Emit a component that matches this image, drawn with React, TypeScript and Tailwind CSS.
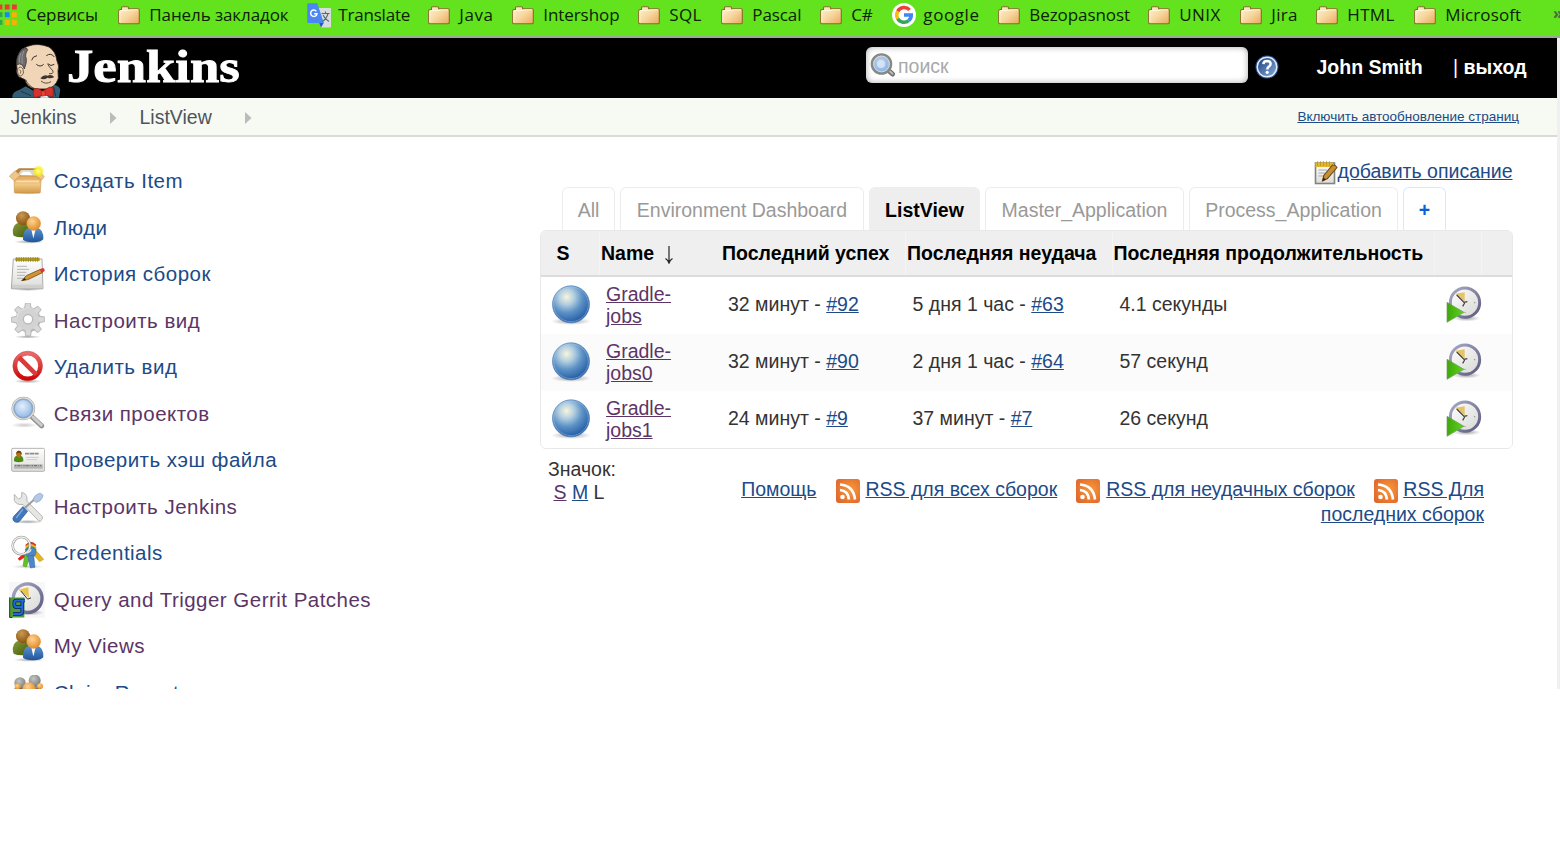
import type { ReactNode } from "react";

const sans = "font-['Liberation_Sans',Arial,sans-serif]";

/* ---------- shared gradients ---------- */

function Gradients() {
  return (
    <svg width="0" height="0" className="absolute">
      <defs>
        <linearGradient id="folder" x1="0" y1="0" x2="1" y2="1">
          <stop offset="0" stopColor="#fff3d0" />
          <stop offset="0.5" stopColor="#f7d7a0" />
          <stop offset="1" stopColor="#e8a85c" />
        </linearGradient>
        <radialGradient id="ball" cx="0.38" cy="0.3" r="0.68">
          <stop offset="0" stopColor="#f7f6dc" />
          <stop offset="0.3" stopColor="#b4cfe0" />
          <stop offset="0.62" stopColor="#5e93c6" />
          <stop offset="1" stopColor="#2a61a8" />
        </radialGradient>
        <radialGradient id="shade">
          <stop offset="0" stopColor="#000" stopOpacity="0.35" />
          <stop offset="1" stopColor="#000" stopOpacity="0" />
        </radialGradient>
        <radialGradient id="brownHead" cx="0.4" cy="0.3" r="0.7">
          <stop offset="0" stopColor="#c99a55" />
          <stop offset="1" stopColor="#8a540f" />
        </radialGradient>
        <radialGradient id="orangeHead" cx="0.4" cy="0.35" r="0.7">
          <stop offset="0" stopColor="#ffd394" />
          <stop offset="1" stopColor="#e0861c" />
        </radialGradient>
        <radialGradient id="greyHead" cx="0.4" cy="0.35" r="0.7">
          <stop offset="0" stopColor="#c4c6c4" />
          <stop offset="1" stopColor="#777a77" />
        </radialGradient>
        <linearGradient id="greenBody" x1="0" y1="0" x2="1" y2="1">
          <stop offset="0" stopColor="#8a9a3c" />
          <stop offset="1" stopColor="#3d5a06" />
        </linearGradient>
        <linearGradient id="blueBody" x1="0" y1="0" x2="0" y2="1">
          <stop offset="0" stopColor="#5e92cf" />
          <stop offset="1" stopColor="#1f559c" />
        </linearGradient>
        <linearGradient id="carton" x1="0" y1="0" x2="0" y2="1">
          <stop offset="0" stopColor="#e0a75c" />
          <stop offset="0.5" stopColor="#f0c884" />
          <stop offset="1" stopColor="#d39a4a" />
        </linearGradient>
        <linearGradient id="silver" x1="0" y1="0" x2="1" y2="1">
          <stop offset="0" stopColor="#f2f2f2" />
          <stop offset="0.5" stopColor="#cfcfcf" />
          <stop offset="1" stopColor="#a9a9a9" />
        </linearGradient>
        <linearGradient id="paper" x1="0" y1="0" x2="0" y2="1">
          <stop offset="0" stopColor="#ffffff" />
          <stop offset="1" stopColor="#dcdcda" />
        </linearGradient>
        <linearGradient id="red" x1="0" y1="0" x2="0" y2="1">
          <stop offset="0" stopColor="#ea6a6a" />
          <stop offset="1" stopColor="#cc0808" />
        </linearGradient>
        <radialGradient id="glass" cx="0.45" cy="0.4" r="0.6">
          <stop offset="0" stopColor="#e6f0fb" />
          <stop offset="1" stopColor="#86b1e2" />
        </radialGradient>
        <linearGradient id="dial" x1="0" y1="0" x2="1" y2="1">
          <stop offset="0" stopColor="#ffffff" />
          <stop offset="1" stopColor="#d6d8d3" />
        </linearGradient>
        <linearGradient id="rim" x1="0" y1="0" x2="1" y2="1">
          <stop offset="0" stopColor="#a9abc6" />
          <stop offset="1" stopColor="#5c5a80" />
        </linearGradient>
        <linearGradient id="play" x1="0" y1="0" x2="1" y2="0">
          <stop offset="0" stopColor="#3fa60c" />
          <stop offset="1" stopColor="#5fd41a" />
        </linearGradient>
        <radialGradient id="rss" cx="0.6" cy="0.45" r="0.75">
          <stop offset="0" stopColor="#f99a3c" />
          <stop offset="1" stopColor="#dd632a" />
        </radialGradient>
        <radialGradient id="sun">
          <stop offset="0" stopColor="#ffffb0" />
          <stop offset="0.5" stopColor="#fbf02a" />
          <stop offset="1" stopColor="#f7e800" stopOpacity="0.1" />
        </radialGradient>
        <linearGradient id="help" x1="0" y1="0" x2="1" y2="1">
          <stop offset="0" stopColor="#1b3f7c" />
          <stop offset="1" stopColor="#86acdc" />
        </linearGradient>
      </defs>
    </svg>
  );
}

/* ---------- bookmark bar ---------- */

function FolderIcon() {
  return (
    <svg width="22" height="19" viewBox="0 0 22 19">
      <path d="M3.500 3.500V1.800Q3.500 .7 4.600 .7H9.500Q10.600 .7 10.600 1.800V2.700H20Q21.300 2.700 21.300 4V16.500Q21.300 17.800 20 17.800H2Q.7 17.800 .7 16.500V5Q.7 3.500 2 3.500Z" fill="url(#folder)" stroke="#8a6a2c" strokeWidth="1.1" />
      <path d="M1.800 16.500V5.200Q1.800 4.600 2.500 4.600H11L12 3.800H20.200" fill="none" stroke="#fff8e2" strokeWidth="0.9" />
    </svg>
  );
}

function AppsIcon() {
  const rows = [
    ["#ea3b33", "#ea3b33", "#ea3b33"],
    ["#2fa84f", "#1f85f5", "#fbb008"],
    ["#2fa84f", "#fbb008", "#fbb008"],
  ];
  return (
    <svg width="19" height="22" viewBox="0 0 19 22">
      {rows.map((r, y) => r.map((c, x) => <rect key={`${x}${y}`} x={x * 7.2 - 0.4} y={y * 7.7 + 0.5} width="4.8" height="5" fill={c} />))}
    </svg>
  );
}

function TranslateIcon() {
  return (
    <svg width="24" height="25" viewBox="0 0 24 25">
      <path d="M10 5H23Q24 5 24 6V23.500Q24 24.500 23 24.500H14Z" fill="#d9dcdc" />
      <path d="M12 19.500H17L14 24.500Z" fill="#2a52c4" />
      <path d="M1.500 .3H10.300L16.800 20H1.500Q.2 20 .2 18.700V1.600Q.2 .3 1.500 .3Z" fill="#4a87f2" />
      <path d="M14.500 10.500H22.500M18.500 8.500V10.500M21 10.500Q19.500 16 15.500 18.500M16 12Q18 16.500 22 18.500" fill="none" stroke="#566b72" strokeWidth="1.1" />
      <path d="M9.400 8.300A3.200 3.200 0 1 0 10 10.800H7.200" fill="none" stroke="#fff" strokeWidth="1.4" />
    </svg>
  );
}

function GoogleIcon() {
  return (
    <svg width="24" height="24" viewBox="0 0 24 24">
      <circle cx="12" cy="12" r="12" fill="#fff" />
      <g fill="none" strokeWidth="3.5">
        <path d="M17.600 6.900A7.300 7.300 0 0 0 5.700 8.300" stroke="#ea4335" />
        <path d="M5.700 8.300A7.300 7.300 0 0 0 5.700 15.700" stroke="#fbbc05" />
        <path d="M5.700 15.700A7.300 7.300 0 0 0 16.700 17.600" stroke="#34a853" />
        <path d="M16.700 17.600A7 7 0 0 0 19.300 12H12" stroke="#4285f4" />
      </g>
    </svg>
  );
}

const bookmarks: { label: string; width: string; icon?: "apps" | "translate" | "google"; text: string }[] = [
  { label: "Сервисы", width: "w-[120px]", icon: "apps", text: "tracking-[-0.07px]" },
  { label: "Панель закладок", width: "w-[189px]", text: "tracking-[-0.1px]" },
  { label: "Translate", width: "w-[121px]", icon: "translate", text: "tracking-[-0.2px]" },
  { label: "Java", width: "w-[84px]", text: "tracking-[0.6px]" },
  { label: "Intershop", width: "w-[126px]", text: "tracking-[-0.08px]" },
  { label: "SQL", width: "w-[83px]", text: "tracking-[0.3px]" },
  { label: "Pascal", width: "w-[99px]", text: "tracking-[-0.1px]" },
  { label: "C#", width: "w-[72px]", text: "tracking-[-0.2px]" },
  { label: "google", width: "w-[106px]", icon: "google", text: "tracking-[0.6px]" },
  { label: "Bezopasnost", width: "w-[150px]", text: "tracking-[-0.08px]" },
  { label: "UNIX", width: "w-[92px]", text: "tracking-[0.4px]" },
  { label: "Jira", width: "w-[76px]", text: "tracking-[0.3px]" },
  { label: "HTML", width: "w-[98px]", text: "tracking-[0.3px]" },
  { label: "Microsoft", width: "w-[138px]", text: "tracking-[0.1px]" },
];

function BookmarkBar() {
  return (
    <div className="flex h-[38px] overflow-hidden border-b-2 border-[#9aa896] bg-[#62e31d] font-['Open_Sans','Segoe_UI',sans-serif] text-[17px] leading-[30px] text-[#0c2204]">
      <div className="-ml-[2px] flex shrink-0">
        {bookmarks.map((b) => (
          <div key={b.label} className={`flex h-[30px] shrink-0 items-center whitespace-nowrap ${b.width}`}>
            <span className={`flex shrink-0 items-center ${b.icon === "apps" ? "w-[28px]" : "w-[31.3px]"} ${b.icon ? "" : "pt-[1px]"}`}>
              {b.icon === "apps" ? <AppsIcon /> : b.icon === "translate" ? <TranslateIcon /> : b.icon === "google" ? <GoogleIcon /> : <FolderIcon />}
            </span>
            <span className={b.text}>{b.label}</span>
          </div>
        ))}
        <span className="ml-[1px] text-[16px] font-bold leading-[26px] text-[#4b6b3c]">»</span>
      </div>
    </div>
  );
}

/* ---------- header ---------- */

function Butler() {
  return (
    <svg width="50" height="54.67" viewBox="35 130 150 164" className="self-end">
      <path d="M36 294Q34 276 58 270L76 260L100 274L128 292L150 272L158 256Q176 256 180 270L176 294Z" fill="#335d77" />
      <path d="M62 275L92 288M160 262L166 290" stroke="#1d3442" strokeWidth="3" fill="none" />
      <path d="M122 288L138 286L146 294H120Z" fill="#fff" />
      <path d="M56 232Q46 222 50 206L48 190Q50 150 82 140Q112 128 146 142Q166 154 170 184Q178 200 173 214L174 236Q166 264 138 268L104 268Q78 262 74 240Q66 236 56 232Z" fill="#f0d6b7" stroke="#2e2420" strokeWidth="2.5" />
      <path d="M50 196Q46 166 66 150Q80 142 82 150Q72 168 78 176Q80 190 72 208L66 196Q56 190 50 196Z" fill="#6d6b6d" stroke="#2c2a2c" strokeWidth="2" />
      <path d="M62 160Q54 176 58 190M70 154Q62 172 66 192" stroke="#a9a7a9" strokeWidth="2" fill="none" />
      <path d="M52 208Q60 196 68 208Q74 222 62 230Q50 226 52 208ZM58 210Q64 214 60 222" fill="#f0d6b7" stroke="#3c2e26" strokeWidth="2" />
      <path d="M94 182Q96 170 110 168M138 168Q152 158 162 172" fill="none" stroke="#3a2f2a" strokeWidth="3" />
      <path d="M108 194Q120 204 130 194M142 192Q152 202 162 194" fill="none" stroke="#3a2f2a" strokeWidth="3" />
      <path d="M142 194Q150 206 158 214Q160 224 146 222" fill="none" stroke="#3a2f2a" strokeWidth="2.5" />
      <path d="M120 236Q130 224 142 228Q152 222 162 232Q150 238 142 234Q130 242 120 236Z" fill="#3e3430" />
      <path d="M122 244Q136 256 152 246M76 240Q84 260 106 268" fill="none" stroke="#3a2f2a" strokeWidth="2.5" />
      <path d="M100 268Q112 262 126 274L148 262Q160 262 159 274L157 292L132 286L102 294Q96 282 100 268Z" fill="#d8302b" stroke="#7c1512" strokeWidth="1.5" />
      <path d="M122 275L134 273L136 288L124 290Z" fill="#ec3f3a" stroke="#8a1815" strokeWidth="1.5" />
    </svg>
  );
}

function SearchIcon() {
  return (
    <svg width="26" height="25" viewBox="0 0 26 25">
      <path d="M18 17L22.500 21" stroke="#70716f" strokeWidth="5" strokeLinecap="round" />
      <path d="M19.500 18L22.500 20.800" stroke="#b9bab7" strokeWidth="2" strokeLinecap="round" />
      <circle cx="11.500" cy="11" r="9.600" fill="url(#glass)" stroke="#868984" strokeWidth="2.4" />
      <circle cx="11.500" cy="11" r="7.800" fill="#7aa6da" fillOpacity="0.35" stroke="#d4d9de" strokeWidth="1" />
      <circle cx="11" cy="11" r="4" fill="#dce9f7" fillOpacity="0.8" />
    </svg>
  );
}

function HelpIcon() {
  return (
    <svg width="24" height="24" viewBox="0 0 24 24">
      <circle cx="12" cy="12" r="11.500" fill="#2a4f8f" />
      <circle cx="12" cy="12" r="9.800" fill="url(#help)" stroke="#e2ebf7" strokeWidth="1.5" />
      <path d="M8.300 9.200Q8.600 5.900 12 5.900Q15.700 6 15.600 9Q15.500 10.600 13.700 11.700Q12.300 12.700 12.300 14.500" fill="none" stroke="#fff" strokeWidth="2.5" />
      <circle cx="12.200" cy="17.300" r="1.600" fill="#fff" />
    </svg>
  );
}

function Header() {
  return (
    <header className={`flex h-[60px] shrink-0 items-stretch overflow-hidden bg-black text-[19.5px] font-bold text-white ${sans}`}>
      <div className="flex w-[866px] pl-[11.7px]">
        <Butler />
        <span className="mt-[6px] ml-[5.5px] inline-block origin-left scale-x-[1.145] self-start font-['Liberation_Serif',Georgia,serif] text-[46px] leading-[46px] whitespace-nowrap [-webkit-text-stroke:0.9px_white]">Jenkins</span>
      </div>
      <div className="mt-[9px] flex h-[36px] w-[382px] items-center rounded-[6px] bg-white pl-[4px] shadow-[inset_0_0_6px_rgba(0,0,0,0.35)]">
        <SearchIcon />
        <span className="ml-[2px] pt-[4px] font-normal text-[#a9a9a9]">поиск</span>
      </div>
      <div className="ml-[7px] flex items-center pb-[2px]">
        <HelpIcon />
      </div>
      <div className="flex items-center whitespace-pre">
        <span className="ml-[37.5px] w-[136.5px]">John Smith</span>
        <span className="w-[10.5px] font-normal">|</span>
        <span>выход</span>
      </div>
    </header>
  );
}

function Crumb({ children }: { children: ReactNode }) {
  return (
    <>
      <span>{children}</span>
      <svg width="8" height="12" viewBox="0 0 8 12">
        <path d="M1 0L7.500 6L1 12Z" fill="#bbb" />
      </svg>
    </>
  );
}

function Breadcrumbs() {
  return (
    <nav className={`flex h-[39px] shrink-0 items-center justify-between border-b-2 border-[#d9dcd6] bg-[#f6faf2] pt-[2px] pr-[38px] pl-[10.5px] text-[19.5px] text-[#4d545d] ${sans}`}>
      <div className="flex items-center">
        <div className="flex w-[129px] items-center gap-[32.5px]">
          <Crumb>Jenkins</Crumb>
        </div>
        <div className="flex items-center gap-[32px]">
          <Crumb>ListView</Crumb>
        </div>
      </div>
      <a className="text-[13.5px] text-[#204a87] underline">Включить автообновление страниц</a>
    </nav>
  );
}

/* ---------- sidebar icons ---------- */

function Icon({ box, children, size = 36 }: { box: string; children: ReactNode; size?: number }) {
  return (
    <svg width={size} height={size} viewBox={box} className="block shrink-0">
      {children}
    </svg>
  );
}

function BoxIcon() {
  return (
    <Icon box="28 39 108 108">
      <ellipse cx="84" cy="128" rx="48" ry="6" fill="url(#shade)" />
      <path d="M48 62L58 55H112L126 66L122 82H46Z" fill="#b98238" />
      <path d="M52 76L64 60H112L116 78Z" fill="#d9d6cc" />
      <path d="M60 76L70 65H90L98 76Z" fill="#fff" />
      <path d="M43 78H125L122 126Q122 129 118 129H48Q44 129 44 126Z" fill="url(#carton)" stroke="#c08a40" strokeWidth="1.5" />
      <path d="M46 62L29 79Q40 89 44 92L62 76Z" fill="#efc68a" stroke="#c08a40" strokeWidth="1.5" />
      <path d="M122 66L134 80L126 90L108 76Z" fill="#efc68a" stroke="#c08a40" strokeWidth="1.5" />
      <path d="M50 94H118" stroke="#f9dfb0" strokeWidth="5" />
      <circle cx="116" cy="64" r="18" fill="url(#sun)" />
    </Icon>
  );
}

function PeopleIcon() {
  return (
    <Icon box="28 178.5 108 108">
      <ellipse cx="88" cy="274" rx="46" ry="6" fill="url(#shade)" />
      <path d="M40 250Q36 222 58 216L92 218L88 258Q60 264 42 256Z" fill="url(#greenBody)" />
      <circle cx="70" cy="203" r="21" fill="url(#brownHead)" />
      <path d="M70 268Q68 236 90 232H112Q132 236 131 266Q122 276 98 275Q78 275 70 268Z" fill="url(#blueBody)" />
      <path d="M95 236L101 264L108 236Z" fill="#fff" />
      <circle cx="102" cy="219" r="21.500" fill="url(#orangeHead)" />
    </Icon>
  );
}

function NotepadIcon() {
  return (
    <Icon box="28 318 108 108">
      <ellipse cx="84" cy="418" rx="50" ry="5" fill="url(#shade)" />
      <path d="M41 327H127L130 416H35Z" fill="url(#paper)" stroke="#9a9c98" strokeWidth="2.5" />
      <path d="M37 404H129V415H37Z" fill="#cfd0cc" />
      <rect x="47" y="323" width="73" height="10" fill="#b5a02c" />
      <path d="M51 321V336M58 321V336M65 321V336M72 321V336M79 321V336M86 321V336M93 321V336M100 321V336M107 321V336M114 321V336" stroke="#857726" strokeWidth="2" />
      <path d="M52 349H82M52 358H88M52 367H80M52 376H76M52 385H70" stroke="#b4b6b2" strokeWidth="3" />
      <path d="M66 392L80 377L122 358L128 368L84 389Z" fill="#cf9436" stroke="#7a5012" strokeWidth="2.5" />
      <path d="M66 392L75 384L79 389Z" fill="#33220a" />
      <path d="M120 358L130 354Q137 356 134 364L126 369Z" fill="#e0333a" />
    </Icon>
  );
}

function GearIcon() {
  const teeth = [0, 45, 90, 135, 180, 225, 270, 315];
  return (
    <Icon box="28 457.5 108 108">
      <ellipse cx="84" cy="559" rx="40" ry="5" fill="url(#shade)" />
      <g fill="#cdcdcd" stroke="#a8a8a8" strokeWidth="2">
        {teeth.map((a) => (
          <path key={a} d="M74 478L77 458H92L95 478Z" transform={`rotate(${a} 85 507)`} />
        ))}
      </g>
      <circle cx="85" cy="507" r="37" fill="url(#silver)" stroke="#a8a8a8" strokeWidth="1.5" />
      <g fill="#d9d9d9">
        {teeth.map((a) => (
          <path key={a} d="M76 482L79 460H90L93 482Z" transform={`rotate(${a} 85 507)`} />
        ))}
      </g>
      <circle cx="85" cy="507" r="32" fill="#d3d3d3" />
      <circle cx="85" cy="506" r="14" fill="#fff" stroke="#b9b9b9" strokeWidth="4" />
    </Icon>
  );
}

function StopIcon() {
  return (
    <Icon box="28 27 108 108">
      <ellipse cx="84" cy="124" rx="42" ry="6" fill="url(#shade)" />
      <circle cx="84" cy="78" r="38" fill="#fff" stroke="url(#red)" strokeWidth="13" />
      <path d="M58 52L110 104" stroke="#dc3a3a" strokeWidth="14" />
      <circle cx="84" cy="78" r="44.500" fill="none" stroke="#c63c3c" strokeWidth="1.5" />
    </Icon>
  );
}

function MagnifierIcon() {
  return (
    <Icon box="28 166.5 108 108">
      <ellipse cx="74" cy="254" rx="40" ry="8" fill="url(#shade)" opacity="0.6" />
      <path d="M98 230L126 256" stroke="#8e908d" strokeWidth="15" strokeLinecap="round" />
      <path d="M100 230L125 254" stroke="#cccdca" strokeWidth="9" strokeLinecap="round" />
      <circle cx="71" cy="204" r="32" fill="url(#glass)" stroke="#a0a29e" strokeWidth="7" />
      <circle cx="71" cy="204" r="32" fill="none" stroke="#dcdddb" strokeWidth="4" />
      <circle cx="71" cy="204" r="27" fill="none" stroke="#6b95cc" strokeWidth="2" />
    </Icon>
  );
}

function CardIcon() {
  return (
    <Icon box="28 306 108 108">
      <rect x="36" y="325" width="99" height="69" rx="4" fill="url(#paper)" stroke="#b4b5b1" strokeWidth="3" />
      <path d="M43 364Q42 350 50 348H64Q72 350 71 364Q58 370 43 364Z" fill="#4e8a14" />
      <path d="M50 346Q46 334 57 332Q68 334 65 346Q62 354 57 354Q52 352 50 346Z" fill="#b5701c" />
      <path d="M50 340Q52 331 58 332Q66 332 66 344L60 338Z" fill="#6e3f08" />
      <path d="M76 341H117" stroke="#8d8e90" strokeWidth="5" strokeDasharray="13 1.5" />
      <path d="M80 352H117M80 359H112" stroke="#c4c5c2" strokeWidth="2.5" />
      <rect x="43" y="373" width="86" height="13" fill="#b4b5b2" />
      <path d="M46 377H126" stroke="#6a6a6a" strokeWidth="3" strokeDasharray="4 3 9 3 2 4" />
    </Icon>
  );
}

function ToolsIcon() {
  return (
    <Icon box="28 445.5 108 108">
      <ellipse cx="84" cy="544" rx="48" ry="6" fill="url(#shade)" />
      <path d="M44 462L57 476L66 470L66 456Q80 458 82 472L82 482L128 528Q130 540 118 542L70 492Q50 494 44 480Z" fill="#e6e6e4" stroke="#a9aaa7" strokeWidth="2.5" />
      <path d="M76 502L110 472" stroke="#9c9ea0" strokeWidth="6" />
      <path d="M100 478Q104 462 122 458L130 464Q128 480 110 486Z" fill="#b4c8e4" stroke="#7e9cc4" strokeWidth="2" />
      <path d="M70 498L84 512L60 542Q50 550 41 540Q38 534 42 528Z" fill="#4377bb" stroke="#2b5796" strokeWidth="2" />
      <path d="M70 506L50 532" stroke="#84abdc" strokeWidth="4" />
    </Icon>
  );
}

function KeysIcon() {
  return (
    <Icon box="28 45 108 108">
      <ellipse cx="84" cy="140" rx="50" ry="6" fill="url(#shade)" opacity="0.6" />
      <path d="M76 76Q92 56 110 74L104 84L86 80Z" fill="#d8342a" />
      <path d="M54 116L76 96L84 106L60 122Z" fill="#e22626" />
      <path d="M106 88L132 118L120 125L98 100Z" fill="#e2b622" stroke="#b58d10" strokeWidth="1.5" />
      <path d="M76 80Q94 62 111 82L106 92L82 90Z" fill="#efb71e" />
      <path d="M76 100L70 138L80 141L92 108Z" fill="#62c322" stroke="#3f9410" strokeWidth="1.5" />
      <path d="M75 88Q94 68 111 88L104 98L82 96Z" fill="#4fae2a" />
      <circle cx="93" cy="97" r="16" fill="#4f86c6" stroke="#2f62a4" strokeWidth="1.5" />
      <path d="M84 108L92 144L106 142L102 106Z" fill="#4f86c6" stroke="#2f62a4" strokeWidth="1.5" />
      <circle cx="65" cy="77" r="26" fill="none" stroke="#8f908d" strokeWidth="7.5" />
      <circle cx="65" cy="77" r="26" fill="none" stroke="#efefed" strokeWidth="4.5" />
      <path d="M76 98Q92 98 94 88" fill="none" stroke="#e9e9e7" strokeWidth="4" />
    </Icon>
  );
}

function GerritIcon() {
  return (
    <Icon box="28 184.5 108 108">
      <rect x="28" y="184" width="108" height="108" fill="#f7f7f7" />
      <ellipse cx="92" cy="276" rx="40" ry="9" fill="url(#shade)" />
      <circle cx="84" cy="233" r="43" fill="url(#dial)" stroke="url(#rim)" strokeWidth="10" />
      <path d="M56 208L86 200L88 232Z" fill="#e9c54c" />
      <path d="M64 212L84 236L94 232" fill="none" stroke="#333" strokeWidth="3" />
      <rect x="30" y="231" width="44" height="60" fill="#4f9a3c" />
      <path d="M30 231V291H38" fill="none" stroke="#23401a" strokeWidth="3" />
      <g fill="none" strokeLinejoin="round">
        <path d="M76 240H50Q44 240 44 247V253Q44 260 51 260H68M68 240V272Q68 280 60 280H40" stroke="#0c1f52" strokeWidth="11" />
        <path d="M76 240H50Q44 240 44 247V253Q44 260 51 260H68M68 240V272Q68 280 60 280H40" stroke="#2267d8" strokeWidth="6.5" />
      </g>
    </Icon>
  );
}

function CrowdIcon() {
  return (
    <Icon box="28 463.5 108 108">
      <path d="M40 540Q36 500 62 496H112Q134 500 130 540Z" fill="#8a8d88" />
      <circle cx="61" cy="487" r="17" fill="url(#greyHead)" />
      <circle cx="105" cy="480" r="18" fill="url(#greyHead)" />
      <path d="M36 508Q44 502 66 504V540H36ZM110 505Q128 502 131 512V540H110Z" fill="#5a2f14" />
      <circle cx="54" cy="498" r="9" fill="url(#orangeHead)" />
      <circle cx="121" cy="497" r="9" fill="url(#orangeHead)" />
      <circle cx="88" cy="504" r="19" fill="url(#orangeHead)" />
    </Icon>
  );
}

const blue = "text-[#204a87]";
const purple = "text-[#5c3566]";

const tasks: { label: string; color: string; icon: ReactNode }[] = [
  { label: "Создать Item", color: blue, icon: <BoxIcon /> },
  { label: "Люди", color: blue, icon: <PeopleIcon /> },
  { label: "История сборок", color: blue, icon: <NotepadIcon /> },
  { label: "Настроить вид", color: purple, icon: <GearIcon /> },
  { label: "Удалить вид", color: blue, icon: <StopIcon /> },
  { label: "Связи проектов", color: purple, icon: <MagnifierIcon /> },
  { label: "Проверить хэш файла", color: blue, icon: <CardIcon /> },
  { label: "Настроить Jenkins", color: purple, icon: <ToolsIcon /> },
  { label: "Credentials", color: blue, icon: <KeysIcon /> },
  { label: "Query and Trigger Gerrit Patches", color: purple, icon: <GerritIcon /> },
  { label: "My Views", color: purple, icon: <PeopleIcon /> },
  { label: "Claim Report", color: blue, icon: <CrowdIcon /> },
];

function Sidebar() {
  return (
    <aside className="w-[539.5px] shrink-0 pt-[20.75px] pl-[9.3px]">
      {tasks.map((t) => (
        <div key={t.label} className="flex h-[46.5px] items-center gap-[8.5px]">
          {t.icon}
          <a className={`pt-[1px] text-[20.5px] tracking-[0.48px] whitespace-nowrap ${t.color}`}>{t.label}</a>
        </div>
      ))}
    </aside>
  );
}

/* ---------- job list ---------- */

function EditIcon() {
  return (
    <svg width="24" height="24" viewBox="0 0 24 24" className="shrink-0">
      <rect x="1.500" y="2" width="19" height="20.500" fill="url(#paper)" stroke="#82847f" strokeWidth="1.6" />
      <path d="M1.500 1.500H19V6H1.500Z" fill="#e3b62f" />
      <path d="M3.500 .3V5M6.500 .3V5M9.500 .3V5M12.500 .3V5M15.500 .3V5" stroke="#c79a1c" strokeWidth="1" />
      <path d="M4.500 9H13M4.500 12H11M4.500 15H9" stroke="#a9aaa6" strokeWidth="1" />
      <path d="M8.500 20L9.800 14.500L18.500 4Q21.500 3.500 23 6.500L13.500 17.500Z" fill="#c98f35" stroke="#6b4712" strokeWidth="1.1" />
      <path d="M8.500 20L9.300 16.500L12 18.500Z" fill="#222" />
    </svg>
  );
}

function BallIcon() {
  return (
    <Icon box="64 403 120 120" size={40}>
      <ellipse cx="124" cy="512" rx="60" ry="11" fill="url(#shade)" />
      <circle cx="124" cy="461" r="55.500" fill="url(#ball)" stroke="#4a7fbc" strokeWidth="2" />
      <circle cx="124" cy="461" r="52" fill="none" stroke="#a6c6e4" strokeOpacity="0.55" strokeWidth="2.5" />
    </Icon>
  );
}

function ScheduleIcon() {
  return (
    <Icon box="45 46 114 114" size={38}>
      <ellipse cx="110" cy="146" rx="42" ry="9" fill="url(#shade)" />
      <circle cx="105" cy="99" r="44" fill="url(#dial)" stroke="url(#rim)" strokeWidth="9" />
      <path d="M76 72L104 68L104 96Z" fill="#e5c468" />
      <path d="M80 76L102 98L112 96M104 100L98 110" fill="none" stroke="#3c3c3c" strokeWidth="3.5" />
      <circle cx="134" cy="99" r="2" fill="#888" />
      <circle cx="105" cy="128" r="2" fill="#888" />
      <path d="M51 98L102 128L51 158Z" fill="url(#play)" stroke="#6f9c68" strokeWidth="2" />
    </Icon>
  );
}

function RssIcon() {
  return (
    <svg width="24" height="24" viewBox="0 0 24 24" className="mt-[2px] shrink-0">
      <rect width="24" height="24" rx="3" fill="url(#rss)" />
      <circle cx="6.500" cy="18" r="2.300" fill="#fff" />
      <path d="M4 11Q12 11.500 13 20.500M4 5.500Q17.500 6.500 19 20.500" fill="none" stroke="#fff" strokeWidth="2.7" />
    </svg>
  );
}

const tabs = [
  { label: "All", width: "w-[53px]" },
  { label: "Environment Dashboard", width: "w-[244px]" },
  { label: "ListView", width: "w-[111px]", active: true },
  { label: "Master_Application", width: "w-[199px]" },
  { label: "Process_Application", width: "w-[209px]" },
];

function Tabs() {
  return (
    <div className="ml-[22.5px] flex h-[43px] gap-[5px] text-center leading-[44px]">
      {tabs.map((t) => (
        <div
          key={t.label}
          className={`rounded-t-[6px] border border-b-0 ${t.width} ${t.active ? "border-[#eee] bg-[#eee] font-bold text-black" : "border-[#ececec] text-[#999]"}`}
        >
          {t.label}
        </div>
      ))}
      <div className="w-[43px] rounded-t-[6px] border border-b-0 border-[#d3ecfb] font-bold text-[#0b60d6]">+</div>
    </div>
  );
}

const columns = "grid grid-cols-[59.5px_121px_185px_206.5px_322.5px_47px_1fr]";

const jobs = [
  { name: ["Gradle-", "jobs"], ok: "32 минут", okRef: "#92", fail: "5 дня 1 час", failRef: "#63", time: "4.1 секунды", bg: "bg-white" },
  { name: ["Gradle-", "jobs0"], ok: "32 минут", okRef: "#90", fail: "2 дня 1 час", failRef: "#64", time: "57 секунд", bg: "bg-[#fbfbfb]" },
  { name: ["Gradle-", "jobs1"], ok: "24 минут", okRef: "#9", fail: "37 минут", failRef: "#7", time: "26 секунд", bg: "bg-white" },
];

function JobTable() {
  return (
    <div className="w-[973px] overflow-hidden rounded-[6px] border border-[#e8e8e8] text-[#333]">
      <div className={`${columns} h-[46px] border-b-2 border-[#dcdcdc] bg-[#efefef] leading-[44px] font-bold whitespace-nowrap text-black`}>
        <span className="border-r border-[#f4f4f4] pl-[16px]">S</span>
        <span className="flex items-center pl-px">
          Name
          <svg width="10" height="18" viewBox="0 0 10 18" className="mt-[4px] ml-[10px]">
            <path d="M5 0V16.500M1.500 12.500Q4 14 5 17Q6 14 8.500 12.500" fill="none" stroke="#222" strokeWidth="1.2" />
          </svg>
        </span>
        <span className="border-r border-[#f4f4f4] pl-px">Последний успех</span>
        <span className="border-r border-[#f4f4f4] pl-px">Последняя неудача</span>
        <span className="border-r border-[#f4f4f4] pl-px">Последняя продолжительность</span>
        <span className="border-r border-[#f4f4f4]" />
        <span />
      </div>
      {jobs.map((j) => (
        <div key={j.name[1]} className={`${columns} h-[57px] items-center pb-[2px] whitespace-nowrap ${j.bg}`}>
          <span className="pl-[10.5px]">
            <BallIcon />
          </span>
          <a className="flex flex-col pl-[6px] leading-[22px] text-[#5c3566] underline">
            <span>{j.name[0]}</span>
            <span>{j.name[1]}</span>
          </a>
          <span className="pl-[7px]">
            {j.ok} - <a className="text-[#204a87] underline">{j.okRef}</a>
          </span>
          <span className="pl-[6.5px]">
            {j.fail} - <a className="text-[#204a87] underline">{j.failRef}</a>
          </span>
          <span className="pl-[7px]">{j.time}</span>
          <span className="pb-[2px] pl-[9.5px]">
            <ScheduleIcon />
          </span>
        </div>
      ))}
    </div>
  );
}

function Footer() {
  return (
    <div className="flex">
      <div className="w-[201px] shrink-0 pt-[9px] pl-[8.5px] leading-[23px] text-[#333]">
        <div>Значок:</div>
        <div className="pl-[5.5px]">
          <a className="text-[#5c3566] underline">S</a> <a className="text-[#204a87] underline">M</a> L
        </div>
      </div>
      <div className="flex w-[743.5px] flex-col items-end pt-[27.5px] leading-[25px] whitespace-nowrap text-[#204a87]">
        <div className="flex h-[25px]">
          <a className="mr-[19.5px] underline">Помощь</a>
          <RssIcon />
          <a className="mr-[19px] ml-[5.5px] underline">RSS для всех сборок</a>
          <RssIcon />
          <a className="mr-[19px] ml-[6px] underline">RSS для неудачных сборок</a>
          <RssIcon />
          <a className="ml-[5.5px] underline">RSS Для</a>
        </div>
        <a className="underline">последних сборок</a>
      </div>
    </div>
  );
}

export default function App() {
  return (
    <div className="h-[850px] w-[1560px] overflow-hidden bg-white">
      <Gradients />
      <BookmarkBar />
      <div className="flex h-[651px] overflow-hidden border-r-[3px] border-[#f0f0f0]">
        <div className="flex w-[1557px] flex-col">
          <Header />
          <Breadcrumbs />
          <main className={`flex h-[552px] overflow-hidden text-[19.5px] ${sans}`}>
            <Sidebar />
            <section className="w-[973px]">
              <div className="flex h-[50px] justify-end pt-[24px]">
                <EditIcon />
                <a className="-mt-[1px] leading-[22px] text-[#204a87] underline">добавить описание</a>
              </div>
              <Tabs />
              <JobTable />
              <Footer />
            </section>
          </main>
        </div>
      </div>
    </div>
  );
}
